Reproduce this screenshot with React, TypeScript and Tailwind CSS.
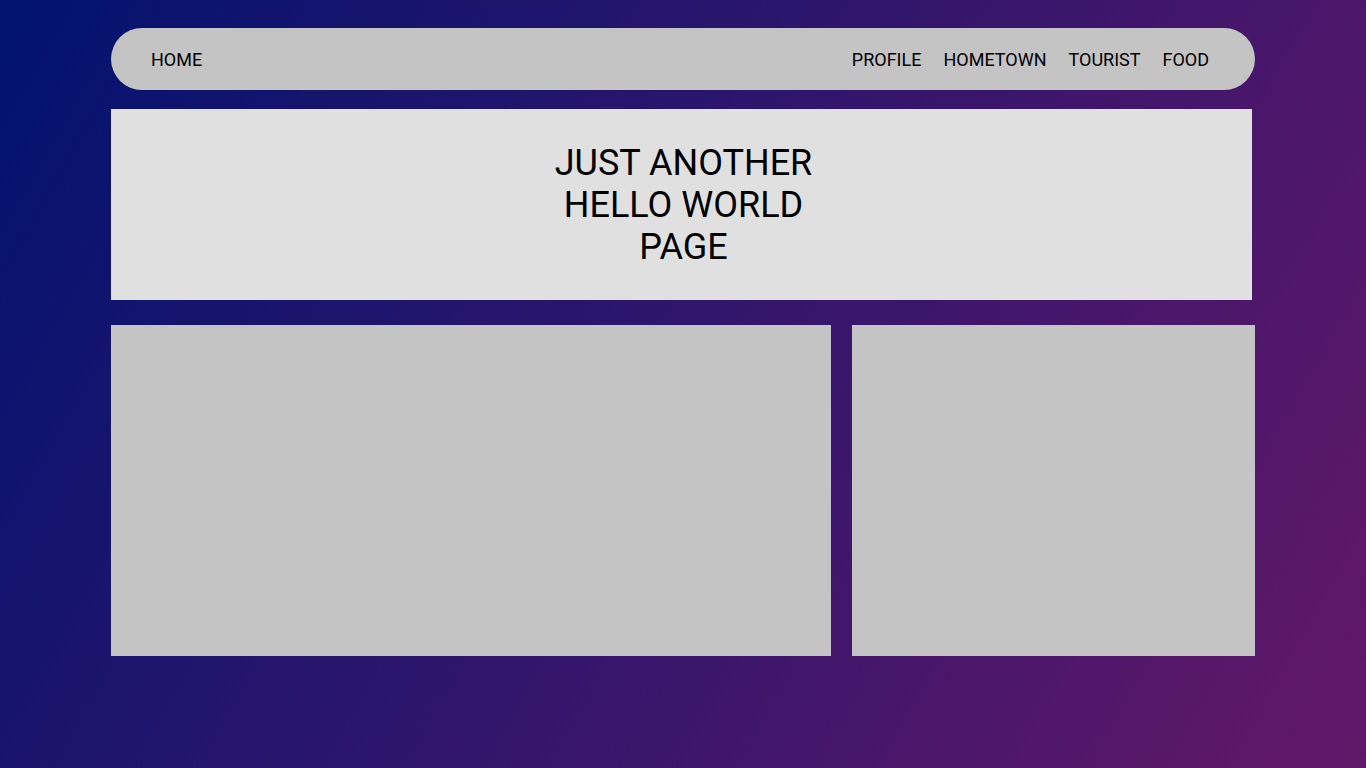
const navLinks = ['PROFILE', 'HOMETOWN', 'TOURIST', 'FOOD'];

export default function App() {
  return (
    <div className="min-h-screen w-full bg-[linear-gradient(120deg,#01136f,#631869)] font-['Roboto',sans-serif] text-black">
      <div className="mx-auto w-[1144px] pt-[28px]">
        {/* Top nav */}
        <nav className="flex h-[62px] items-center justify-between rounded-full bg-[#c4c4c4] pl-[40px] pr-[46px] text-[18px] leading-[27px]">
          <a href="#" className="pt-px">HOME</a>
          <ul className="flex items-center gap-[22px] pt-px">
            {navLinks.map((link) => (
              <li key={link}>
                <a href="#">{link}</a>
              </li>
            ))}
          </ul>
        </nav>

        {/* Hero */}
        <header className="mt-[19px] flex h-[191px] w-[1141px] items-center justify-center bg-[#e0e0e0] pl-[4px]">
          <h1 className="w-[300px] text-center text-[36px] leading-[42px]">
            JUST ANOTHER HELLO WORLD PAGE
          </h1>
        </header>

        {/* Content */}
        <main className="mt-[25px] flex h-[331px] gap-[21px]">
          <section className="w-[720px] bg-[#c4c4c4]"></section>
          <aside className="flex-1 bg-[#c4c4c4]"></aside>
        </main>
      </div>
    </div>
  );
}
